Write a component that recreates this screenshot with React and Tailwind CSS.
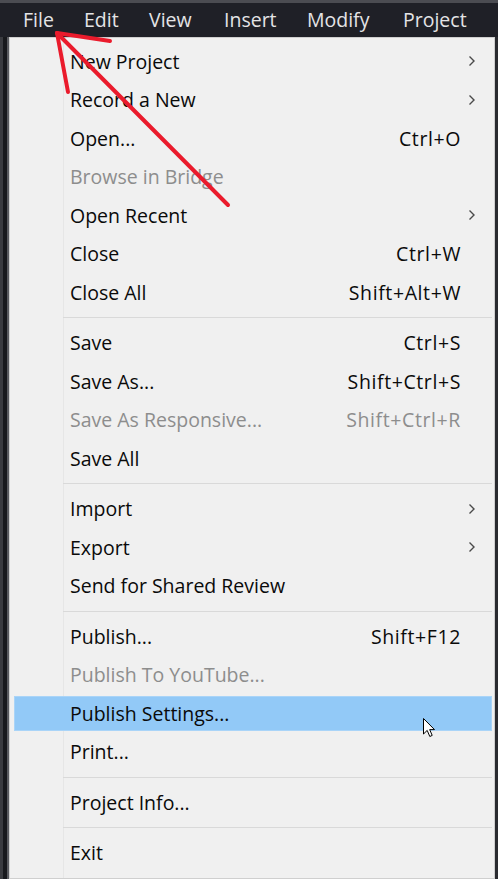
import React from 'react';

const menuBar = [
  { label: 'File', w: 'w-[61px]' },
  { label: 'Edit', w: 'w-[65px]' },
  { label: 'View', w: 'w-[75px]' },
  { label: 'Insert', w: 'w-[83px]' },
  { label: 'Modify', w: 'w-[96px]' },
  { label: 'Project', w: 'w-[90px]' },
];

// sep: true draws a separator line
const items = [
  { label: 'New Project', sub: true },
  { label: 'Record a New', sub: true },
  { label: 'Open...', keys: 'Ctrl+O' },
  { label: 'Browse in Bridge', disabled: true },
  { label: 'Open Recent', sub: true },
  { label: 'Close', keys: 'Ctrl+W' },
  { label: 'Close All', keys: 'Shift+Alt+W' },
  { sep: true },
  { label: 'Save', keys: 'Ctrl+S' },
  { label: 'Save As...', keys: 'Shift+Ctrl+S' },
  { label: 'Save As Responsive...', keys: 'Shift+Ctrl+R', disabled: true },
  { label: 'Save All' },
  { sep: true },
  { label: 'Import', sub: true },
  { label: 'Export', sub: true },
  { label: 'Send for Shared Review' },
  { sep: true },
  { label: 'Publish...', keys: 'Shift+F12' },
  { label: 'Publish To YouTube...', disabled: true },
  { label: 'Publish Settings...', active: true },
  { label: 'Print...' },
  { sep: true },
  { label: 'Project Info...' },
  { sep: true },
  { label: 'Exit' },
];

const Chevron = () => (
  <svg width="8" height="12" viewBox="0 0 8 12" className="block">
    <polyline points="1.5,1.5 6,6 1.5,10.5" fill="none" stroke="#4a4a4a" strokeWidth="1.4" />
  </svg>
);

const MenuRow = ({ item }) => {
  if (item.sep) {
    return (
      <div className="h-[12px] flex items-center pl-[53px] pr-[2px]">
        <div className="h-px w-full bg-[#d9d9d9]" />
      </div>
    );
  }
  const text = item.disabled ? 'text-[#8d8d8d]' : 'text-[#0a0a0a]';
  return (
    <div className="h-[38.5px] flex">
      <div
        className={`flex-1 flex items-center ml-[4px] mr-[2px] my-[2px] ${
          item.active ? 'bg-[#92c9f7] border border-[#a9d4f8]' : 'border border-transparent'
        }`}
      >
        <span className={`pl-[55px] flex-1 text-[19.5px] ${text}`}>{item.label}</span>
        {item.keys && (
          <span className={`text-[19.5px] tracking-[0.6px] pr-[30px] ${text}`}>{item.keys}</span>
        )}
        {item.sub && (
          <span className="pr-[15px]">
            <Chevron />
          </span>
        )}
      </div>
    </div>
  );
};

export default function App() {
  return (
    <div className="relative w-[498px] h-[879px] overflow-hidden bg-[#1f2027] font-['Segoe_UI','Open_Sans',sans-serif] leading-none">
      <div className="h-[3px] bg-[#4b4c52]" />
      <div className="h-[34px] flex items-center pl-[23px] text-[19.5px] text-[#e4e4e6]">
        {menuBar.map((m) => (
          <span key={m.label} className={`${m.w} shrink-0`}>
            {m.label}
          </span>
        ))}
      </div>

      <div className="flex h-[842px]">
        <div className="w-[9px] flex">
          <div className="w-[3px] bg-[#3a3b40]" />
          <div className="w-[4px] bg-[#18191d]" />
          <div className="w-[2px] bg-[#5a5b60]" />
        </div>
        <div className="relative w-[486px] bg-[#f0f0f0] border border-[#cfcfcf] pt-[4px]">
          <div className="absolute left-[53px] top-0 bottom-0 w-px bg-[#e6e6e6]" />
          <div className="relative">
            {items.map((item, i) => (
              <MenuRow key={i} item={item} />
            ))}
          </div>
        </div>
        <div className="w-[3px] bg-[#2a2b30]" />
      </div>

      {/* annotation arrow */}
      <svg className="absolute left-0 top-0 pointer-events-none" width="498" height="879">
        <g stroke="#ea1b2c" strokeWidth="4" strokeLinecap="round" fill="none">
          <line x1="57" y1="33" x2="228" y2="205" />
          <line x1="57" y1="33" x2="110" y2="41" />
          <line x1="57" y1="33" x2="68" y2="92" />
        </g>
      </svg>

      {/* mouse cursor */}
      <svg className="absolute left-[423px] top-[718px] pointer-events-none" width="13" height="20" viewBox="0 0 13 20">
        <path d="M0.5 0.5 L0.5 16 L4.2 12.4 L6.8 18.5 L9.2 17.4 L6.7 11.6 L11.5 11.6 Z" fill="#fff" stroke="#000" strokeWidth="1" strokeLinejoin="round" />
      </svg>
    </div>
  );
}
